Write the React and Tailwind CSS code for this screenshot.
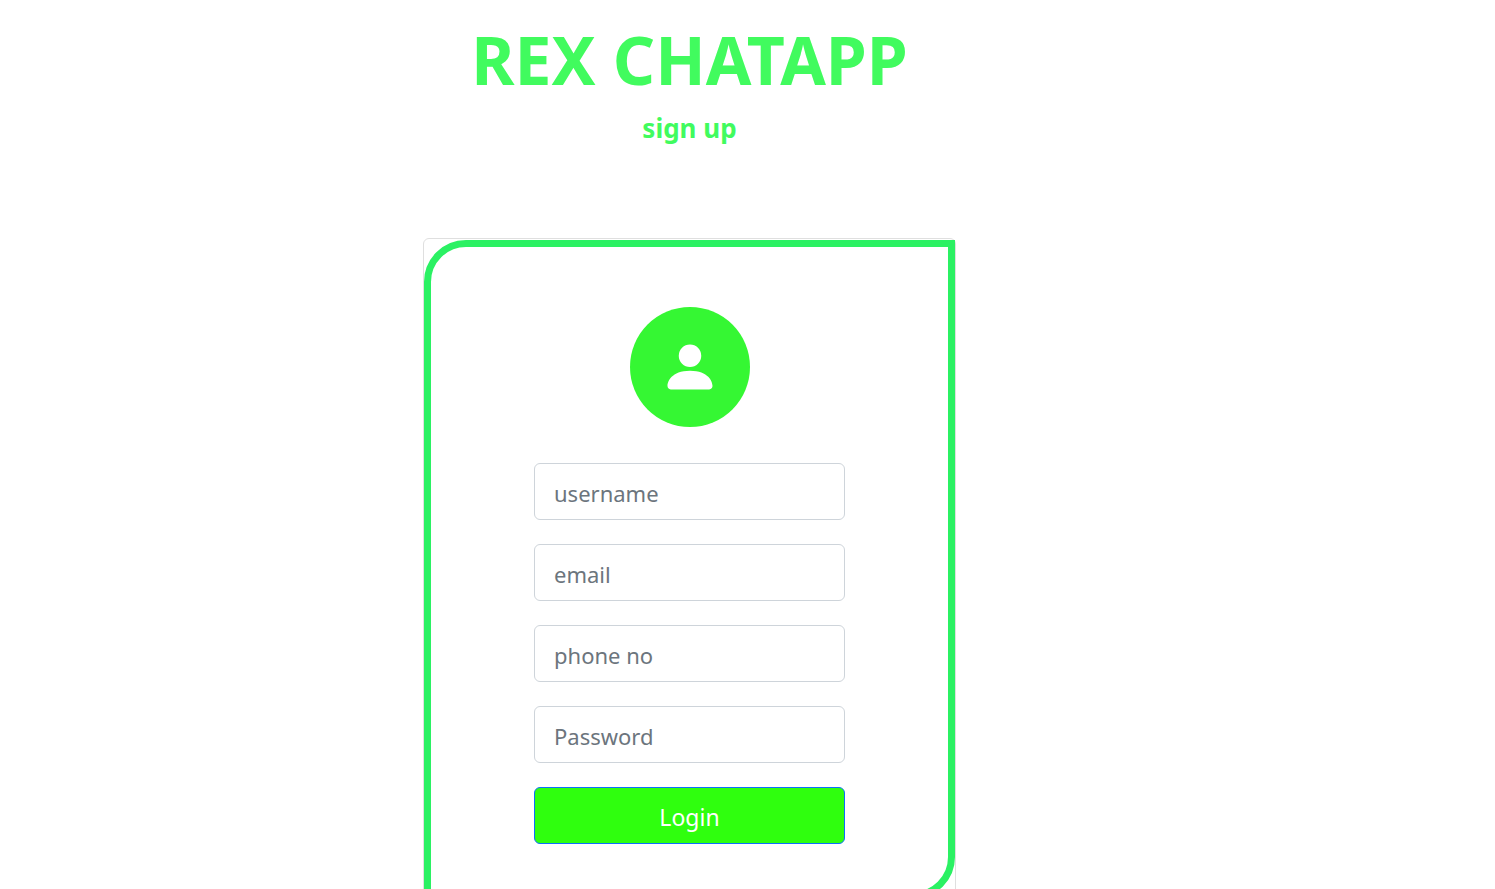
const fields = [
  { id: "username", type: "text", label: "username" },
  { id: "email", type: "email", label: "email" },
  { id: "phone", type: "tel", label: "phone no" },
  { id: "password", type: "password", label: "Password" },
];

function PersonIcon() {
  return (
    <svg viewBox="0 0 16 16" className="size-[60px] fill-white" aria-hidden="true">
      <path d="M3 14s-1 0-1-1 1-4 6-4 6 3 6 4-1 1-1 1H3zm5-6a3 3 0 1 0 0-6 3 3 0 0 0 0 6z" />
    </svg>
  );
}

export default function App() {
  return (
    <main className="flex flex-col items-center bg-white pt-5 pr-[116px] font-['Noto_Sans','Open_Sans',sans-serif]">
      <h1 className="text-[66px] leading-[78px] font-bold text-[#41fb5e]">REX CHATAPP</h1>
      <h2 className="mt-3 text-[26px] leading-9 font-bold text-[#41fb5e]">sign up</h2>
      <section className="mt-[92px] w-full max-w-[533px] rounded-md border border-[#dfdfdf] pt-px">
        <div className="rounded-tl-[42px] rounded-br-[42px] border-[7px] border-[#2bf163] px-[103px] pt-[60px] pb-12">
          <div className="mx-auto mb-9 flex size-[120px] items-center justify-center rounded-full bg-[#35f733]">
            <PersonIcon />
          </div>
          <form className="flex flex-col gap-6" onSubmit={(event) => event.preventDefault()}>
            {fields.map(({ id, type, label }) => (
              <input
                key={id}
                id={id}
                name={id}
                type={type}
                aria-label={label}
                placeholder={label}
                className="h-[57px] w-full rounded-md border border-[#ced4da] bg-white px-[19px] pt-[3px] text-[22px] text-[#212529] placeholder:text-[#6c757d]"
              />
            ))}
            <button
              type="submit"
              className="h-[57px] w-full rounded-md border border-[#0d6efd] bg-[#2fff0e] pt-1 text-[23px] text-white"
            >
              Login
            </button>
          </form>
        </div>
      </section>
    </main>
  );
}
